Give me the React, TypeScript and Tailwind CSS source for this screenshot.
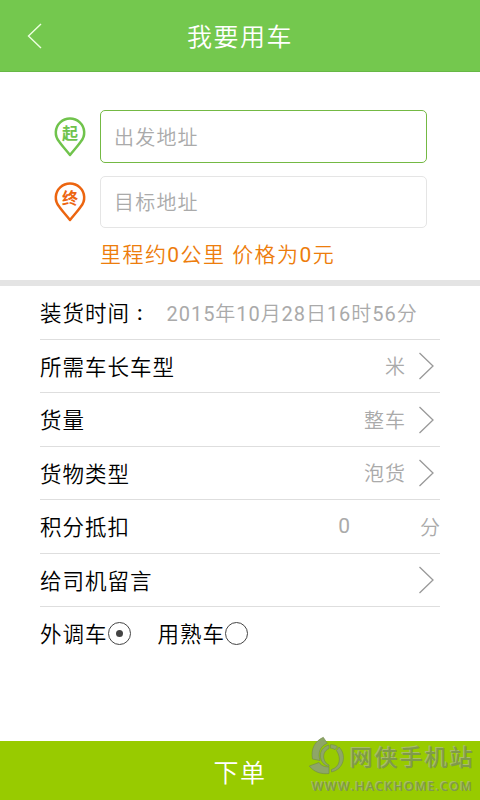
import React from "react";

const FONT = "font-['Roboto','Noto_Sans_CJK_SC_DemiLight','NotoSansCJKsc-DemiLight','Noto_Sans_CJK_SC',sans-serif] font-normal";

function Pin({ label, color, fill }: { label: string; color: string; fill: string }) {
  return (
    <div className="relative h-[40px] w-[32px] shrink-0">
      <svg width="32" height="40" viewBox="0 0 32 40" fill="none" stroke={color} strokeWidth="2.5" strokeLinejoin="round">
        <path d="M16 38 C12.5 33.5 7.8 28.5 5.2 24.6 A14.2 14 0 1 1 26.8 24.6 C24.2 28.5 19.5 33.5 16 38 Z" />
      </svg>
      <span className={`absolute inset-x-0 top-[6px] text-center font-['Noto_Sans_CJK_SC',sans-serif] text-[16px] leading-[18px] font-bold ${fill}`}>{label}</span>
    </div>
  );
}

function Chevron() {
  return (
    <svg className="ml-[12px] mr-[5px] shrink-0" width="17" height="28" viewBox="0 0 17 28" fill="none" stroke="#999" strokeWidth="1.3">
      <path d="M1.5 1 L15 14 L1.5 27" />
    </svg>
  );
}

function Row({ label, height, children }: { label: string; height: string; children?: React.ReactNode }) {
  return (
    <div className={`flex items-center border-b border-[#dedede] ${height}`}>
      <span className="pt-[3px] text-[21.5px] tracking-[1px] text-black">{label}</span>
      {children}
    </div>
  );
}

function Value({ children }: { children: React.ReactNode }) {
  return <span className="ml-auto pt-[2px] text-[20px] tracking-[1px] text-[#aaa]">{children}</span>;
}

function Radio({ checked }: { checked?: boolean }) {
  return (
    <span className="flex size-[23px] items-center justify-center rounded-full border-[1.5px] border-[#444]">
      {checked && <span className="size-[7px] rounded-full bg-[#444]" />}
    </span>
  );
}

export default function App() {
  return (
    <div className={`relative flex h-[800px] w-[480px] flex-col overflow-hidden bg-white leading-none ${FONT}`}>
      <header className="grid h-[72px] shrink-0 grid-cols-[1fr_auto_1fr] items-center border-b border-[#67b846] bg-[#74c84e]">
        <svg className="ml-[27px]" width="16" height="26" viewBox="0 0 16 26" fill="none" stroke="#edffe0" strokeWidth="1.4">
          <path d="M14 1 L1.5 13 L14 25" />
        </svg>
        <h1 className="pt-[4px] text-[25px] tracking-[1.5px] text-white">我要用车</h1>
      </header>

      <section className="flex h-[208px] shrink-0 flex-col pt-[38px] pl-[54px]">
        <div className="flex h-[53px] items-center gap-[14px]">
          <Pin label="起" color="#70c34c" fill="text-[#70c34c]" />
          <div className="flex h-[53px] w-[327px] items-center rounded-[5px] border-[1.5px] border-[#74b944] pt-[2px] pl-[13px] text-[20px] tracking-[1.2px] text-[#aaa]">出发地址</div>
        </div>
        <div className="mt-[13px] flex h-[52px] items-center gap-[14px]">
          <Pin label="终" color="#ec6510" fill="text-[#ec6510]" />
          <div className="flex h-[52px] w-[327px] items-center rounded-[5px] border-[1.5px] border-[#e5e5e5] pt-[2px] pl-[13px] text-[20px] tracking-[1.2px] text-[#aaa]">目标地址</div>
        </div>
        <p className="mt-[17px] ml-[46px] text-[21px] tracking-[1.45px] text-[#ed7d0c]">里程约0公里 价格为0元</p>
      </section>

      <div className="h-[6px] shrink-0 bg-[#e4e4e4]" />

      <section className="flex shrink-0 flex-col px-[40px]">
        <Row label="装货时间" height="h-[54px]">
          <span className="ml-[7px] pt-[2px] text-[21px] font-medium text-black">:</span>
          <span className="ml-[24px] pt-[2px] text-[20px] tracking-[0.95px] whitespace-nowrap text-[#aaa]">2015年10月28日16时56分</span>
        </Row>
        <Row label="所需车长车型" height="h-[53px]"><Value>米</Value><Chevron /></Row>
        <Row label="货量" height="h-[54px]"><Value>整车</Value><Chevron /></Row>
        <Row label="货物类型" height="h-[53px]"><Value>泡货</Value><Chevron /></Row>
        <Row label="积分抵扣" height="h-[54px]">
          <span className="ml-auto text-[21px] text-[#aaa]">0</span>
          <span className="ml-[70px] pt-[2px] text-[20px] text-[#aaa]">分</span>
        </Row>
        <Row label="给司机留言" height="h-[53px]"><span className="ml-auto" /><Chevron /></Row>
        <div className="flex h-[53px] items-center text-[21.5px] tracking-[1px] text-black">
          <span className="pt-[3px]">外调车</span>
          <Radio checked />
          <span className="ml-[27px] pt-[3px]">用熟车</span>
          <Radio />
        </div>
      </section>

      <button className="mt-auto flex h-[59px] shrink-0 items-center justify-center bg-[#98cb00] pt-[5px] text-[25px] tracking-[1.4px] text-white">下单</button>

      <div className="absolute top-[736px] left-[308px] h-[64px] w-[172px] text-[#7f9a4b]">
        <svg className="absolute top-0 left-0" width="40" height="40" viewBox="0 0 40 40">
          <g fill="#8ea667" stroke="#70894a" strokeWidth="0.6">
            <path d="M15.3 1.3 L19.3 7.3 C12 10 9.5 17 12 24.5 L4.5 23 C2.5 13 7 5 15.3 1.3 Z" />
            <path d="M1.3 30 L11 26.5 C13.5 30 17 31 21 31 L21 37.5 C13 38.5 6 36 1.3 30 Z" />
            <path d="M21 9 L21 12.5 C16 14.5 14.5 20 16.5 24.5 C17.5 27 19.5 28.3 21 29 L21 30.5 C10 28 9 12 21 9 Z" />
            <path d="M22.5 8.7 C25 8.4 27.5 9.2 29.5 10.7 L27 13.7 C25.7 12.7 24 12.2 22.5 12.2 Z" />
            <path d="M31 11 C39 19 36 33 23.5 36 L23.5 33.5 C32 31 33.5 22 28.5 14.5 Z" />
          </g>
        </svg>
        <span className="absolute top-[9px] left-[42px] font-['Noto_Sans_CJK_SC',sans-serif] text-[23px] tracking-[2px] font-medium whitespace-nowrap [text-shadow:-1px_-1px_0_#a9bd68]">网侠手机站</span>
        <span className="absolute top-[45px] left-[4px] font-['Open_Sans',sans-serif] text-[12.5px] font-semibold tracking-[1.15px] whitespace-nowrap [text-shadow:-1px_-1px_0_#a9bd68]">WWW.HACKHOME.COM</span>
      </div>
    </div>
  );
}
